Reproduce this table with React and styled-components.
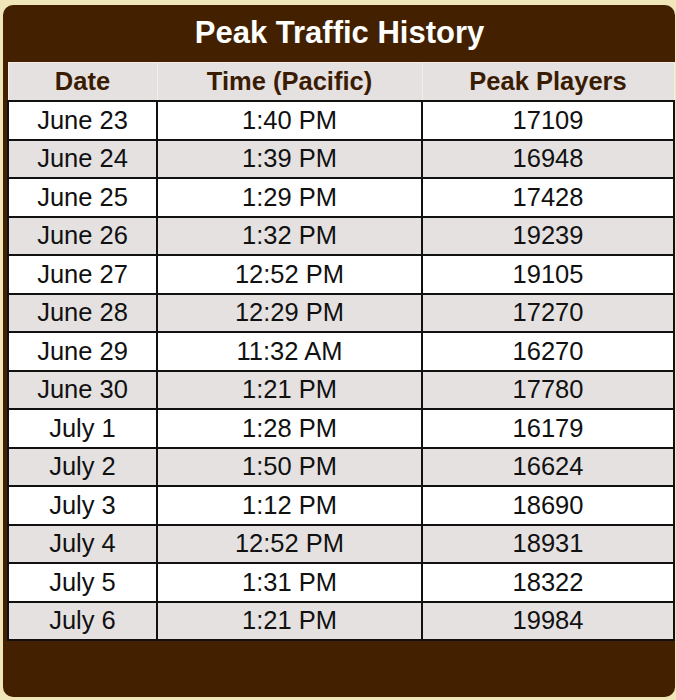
import React from "react"
import styled, { createGlobalStyle } from "styled-components"

const rows = [
  ["June 23", "1:40 PM", "17109"],
  ["June 24", "1:39 PM", "16948"],
  ["June 25", "1:29 PM", "17428"],
  ["June 26", "1:32 PM", "19239"],
  ["June 27", "12:52 PM", "19105"],
  ["June 28", "12:29 PM", "17270"],
  ["June 29", "11:32 AM", "16270"],
  ["June 30", "1:21 PM", "17780"],
  ["July 1", "1:28 PM", "16179"],
  ["July 2", "1:50 PM", "16624"],
  ["July 3", "1:12 PM", "18690"],
  ["July 4", "12:52 PM", "18931"],
  ["July 5", "1:31 PM", "18322"],
  ["July 6", "1:21 PM", "19984"],
]

export default function App() {
  return (
    <>
      <GlobalStyle />
      <Panel>
        <Title>Peak Traffic History</Title>
        <Table>
          <colgroup>
            <col style={{ width: 149 }} />
            <col style={{ width: 265 }} />
            <col style={{ width: 252 }} />
          </colgroup>
          <thead>
            <tr>
              <HeadCell>Date</HeadCell>
              <HeadCell>Time (Pacific)</HeadCell>
              <HeadCell>Peak Players</HeadCell>
            </tr>
          </thead>
          <tbody>
            {rows.map((r, i) => (
              <Row key={r[0]} $shaded={i % 2 === 1}>
                <Cell>{r[0]}</Cell>
                <Cell>{r[1]}</Cell>
                <Cell>{r[2]}</Cell>
              </Row>
            ))}
          </tbody>
        </Table>
      </Panel>
    </>
  )
}

const GlobalStyle = createGlobalStyle`
  html, body {
    margin: 0;
    background: #f1e6ba;
  }
`

const Panel = styled.div`
  margin: 5px 1px 3px 3px;
  height: 692px;
  box-sizing: border-box;
  background: #432100;
  border-radius: 10px;
  padding: 0 3px 0 4px;
  font-family: "Liberation Sans", Arial, sans-serif;
`

const Title = styled.h1`
  margin: 0;
  height: 57px;
  line-height: 56px;
  text-align: center;
  color: #fff;
  font-size: 31px;
  font-weight: 700;
`

const Table = styled.table`
  width: 666px;
  table-layout: fixed;
  border-collapse: collapse;
`

const HeadCell = styled.th`
  height: 37px;
  padding: 0;
  background: #e5e1e1;
  border: 1px solid #f6ece8;
  border-bottom: 2px solid #111;
  color: #3a1c02;
  font-size: 25.5px;
  font-weight: 700;
  text-align: center;
`

const Row = styled.tr`
  background: ${(p) => (p.$shaded ? "#e5e1e1" : "#fff")};
`

const Cell = styled.td`
  height: 36.5px;
  padding: 0;
  border: 2px solid #111;
  color: #111;
  font-size: 25.5px;
  text-align: center;
  vertical-align: middle;
`
